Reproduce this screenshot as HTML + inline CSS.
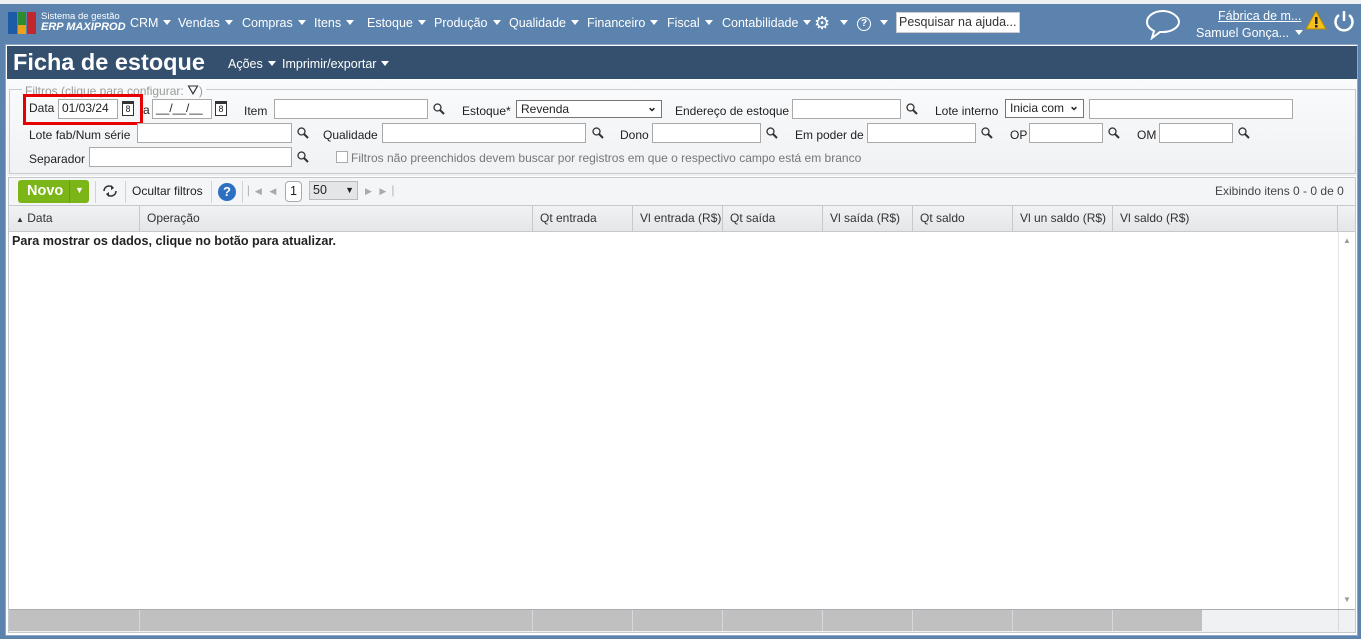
<!DOCTYPE html>
<html><head><meta charset="utf-8"><style>
*{box-sizing:border-box;margin:0;padding:0}
body{width:1361px;height:639px;overflow:hidden;background:#5b83ad;font-family:"Liberation Sans",Arial,sans-serif;font-size:12.5px;color:#222;position:relative}
.a{position:absolute;white-space:nowrap}
.nav{color:#fff;font-size:12.5px;top:16px}
.tri{display:inline-block;width:0;height:0;border-left:4px solid transparent;border-right:4px solid transparent;border-top:5px solid #fff;margin-left:5px;vertical-align:2px}
.inp{position:absolute;background:#fff;border:1px solid #a9a9a9;height:20px;white-space:nowrap;overflow:hidden;font-size:12px}
.lbl{position:absolute;font-size:12px;white-space:nowrap}
.mag{position:absolute;width:12px;height:12px}
.th{position:absolute;top:206px;height:26px;border-right:1px solid #c5c8cc;padding:5px 7px;color:#333;font-size:12px;white-space:nowrap}
.fc{position:absolute;top:610px;height:21px;border-right:1px solid #d6d8db}
.cal{position:absolute;width:12px;height:15px;border:1.5px solid #333;border-top-width:3px;font-size:9px;text-align:center;line-height:11px;background:#fff}
</style></head><body>
<div class="a" style="left:0;top:0;width:1361px;height:4px;background:#eef0f2"></div>
<div class="a" style="left:8px;top:12px;width:9px;height:22px;background:#1d5aa8"></div>
<div class="a" style="left:18px;top:12px;width:8px;height:13px;background:#2e8b2e"></div>
<div class="a" style="left:18px;top:25px;width:8px;height:9px;background:#e9a21a"></div>
<div class="a" style="left:27px;top:12px;width:9px;height:22px;background:#c0282d"></div>
<div class="a" style="left:41px;top:11px;color:#fff;font-size:9.5px">Sistema de gestão</div>
<div class="a" style="left:41px;top:21px;color:#fff;font-size:11px;font-style:italic;font-weight:bold">ERP MAXIPROD</div>
<div class="a nav" style="left:130px">CRM<span class="tri"></span></div>
<div class="a nav" style="left:178px">Vendas<span class="tri"></span></div>
<div class="a nav" style="left:242px">Compras<span class="tri"></span></div>
<div class="a nav" style="left:314px">Itens<span class="tri"></span></div>
<div class="a nav" style="left:367px">Estoque<span class="tri"></span></div>
<div class="a nav" style="left:434px">Produção<span class="tri"></span></div>
<div class="a nav" style="left:509px">Qualidade<span class="tri"></span></div>
<div class="a nav" style="left:587px">Financeiro<span class="tri"></span></div>
<div class="a nav" style="left:667px">Fiscal<span class="tri"></span></div>
<div class="a nav" style="left:722px">Contabilidade<span class="tri"></span></div>
<div class="a" style="left:814px;top:14px;color:#fff;font-size:18px;line-height:18px">⚙</div>
<div class="a nav" style="left:835px"><span class="tri"></span></div>
<div class="a" style="left:857px;top:17px;width:14px;height:14px;border:1.5px solid #fff;border-radius:50%;color:#fff;font-size:10px;text-align:center;line-height:11px;font-weight:bold">?</div>
<div class="a nav" style="left:875px"><span class="tri"></span></div>
<div class="a" style="left:896px;top:12px;width:124px;height:21px;background:#fff;border:1px solid #ccc;font-size:12.5px;padding:2px 2px;color:#333;overflow:hidden">Pesquisar na ajuda...</div>
<svg class="a" style="left:1144px;top:8px" width="38" height="32" viewBox="0 0 38 32"><path d="M19 3C10 3 3 8 3 14c0 4 3 7 7 9l-2 7 8-6h3c9 0 16-5 16-10S28 3 19 3z" fill="none" stroke="#fff" stroke-width="2"/></svg>
<div class="a" style="left:1218px;top:9px;color:#fff;font-size:12.5px;text-decoration:underline">Fábrica de m...</div>
<div class="a" style="left:1196px;top:26px;color:#fff;font-size:12.5px">Samuel Gonça...<span class="tri" style="margin-left:6px"></span></div>
<svg class="a" style="left:1305px;top:10px" width="22" height="20"><path d="M11 1L21 19H1z" fill="#f4c01e" stroke="#b58a00"/><rect x="10" y="7" width="2.5" height="7" fill="#222"/><rect x="10" y="15" width="2.5" height="2.5" fill="#222"/></svg>
<svg class="a" style="left:1333px;top:9px" width="22" height="24"><path d="M6 6A8.5 8.5 0 1 0 16 6" fill="none" stroke="#fff" stroke-width="2.5"/><path d="M11 2V12" stroke="#fff" stroke-width="2.5"/></svg>

<div class="a" style="left:5px;top:44px;width:1353px;height:592px;background:#fff;border:1px solid #8fa7c2"></div>
<div class="a" style="left:7px;top:46px;width:1350px;height:33px;background:#34506e"></div>
<div class="a" style="left:13px;top:49px;color:#fff;font-size:23.5px;font-weight:bold">Ficha de estoque</div>
<div class="a" style="left:228px;top:57px;color:#fff;font-size:12.5px">Ações<span class="tri"></span></div>
<div class="a" style="left:282px;top:57px;color:#fff;font-size:12.5px">Imprimir/exportar<span class="tri"></span></div>
<div class="a" style="left:7px;top:79px;width:1350px;height:97px;background:linear-gradient(#fafbfc,#eff1f3)"></div>
<div class="a" style="left:9px;top:89px;width:1347px;height:85px;border:1px solid #c8cbcf"></div>
<div class="a" style="left:22px;top:82px;background:#f9fafb;padding:0 3px;color:#999;font-size:12px">Filtros (clique para configurar: <span style="color:#333;font-size:14px">⛛</span>)</div>
<div class="a" style="left:23px;top:94px;width:120px;height:31px;border:3px solid #e60000"></div>
<div class="lbl" style="left:29px;top:101px">Data</div>
<div class="inp" style="left:58px;top:99px;width:60px;padding:1px 3px">01/03/24</div>
<div class="cal" style="left:122px;top:101px">8</div>
<div class="lbl" style="left:143px;top:103px">a</div>
<div class="inp" style="left:152px;top:99px;width:60px;padding:1px 3px">__/__/__</div>
<div class="cal" style="left:215px;top:101px">8</div>
<div class="lbl" style="left:244px;top:104px">Item</div>
<div class="inp" style="left:274px;top:99px;width:154px"></div>
<div class="lbl" style="left:462px;top:104px">Estoque*</div>
<div class="inp" style="left:516px;top:100px;width:146px;height:18px;padding:1px 4px;border-color:#767676">Revenda<span style="position:absolute;right:4px;top:-1px;font-weight:bold">⌄</span></div>
<div class="lbl" style="left:675px;top:104px">Endereço de estoque</div>
<div class="inp" style="left:792px;top:99px;width:109px"></div>
<div class="lbl" style="left:935px;top:104px">Lote interno</div>
<div class="inp" style="left:1005px;top:99px;width:79px;height:19px;padding:1px 4px;border-color:#767676">Inicia com<span style="position:absolute;right:4px;top:-1px;font-weight:bold">⌄</span></div>
<div class="inp" style="left:1089px;top:99px;width:204px"></div>
<div class="lbl" style="left:29px;top:128px">Lote fab/Num série</div>
<div class="inp" style="left:137px;top:123px;width:155px"></div>
<div class="lbl" style="left:323px;top:128px">Qualidade</div>
<div class="inp" style="left:382px;top:123px;width:204px"></div>
<div class="lbl" style="left:620px;top:128px">Dono</div>
<div class="inp" style="left:652px;top:123px;width:109px"></div>
<div class="lbl" style="left:795px;top:128px">Em poder de</div>
<div class="inp" style="left:867px;top:123px;width:109px"></div>
<div class="lbl" style="left:1010px;top:128px">OP</div>
<div class="inp" style="left:1029px;top:123px;width:74px"></div>
<div class="lbl" style="left:1137px;top:128px">OM</div>
<div class="inp" style="left:1159px;top:123px;width:74px"></div>
<div class="lbl" style="left:29px;top:152px">Separador</div>
<div class="inp" style="left:89px;top:147px;width:203px"></div>
<div class="a" style="left:336px;top:151px;width:12px;height:12px;border:1px solid #aaa;background:#fff"></div>
<div class="lbl" style="left:351px;top:151px;color:#777">Filtros não preenchidos devem buscar por registros em que o respectivo campo está em branco</div>
<svg class="mag" style="left:433px;top:103px"><circle cx="4.5" cy="4.5" r="3.5" fill="none" stroke="#333" stroke-width="1.3"/><path d="M7 7l4 4" stroke="#333" stroke-width="2"/></svg>
<svg class="mag" style="left:906px;top:103px"><circle cx="4.5" cy="4.5" r="3.5" fill="none" stroke="#333" stroke-width="1.3"/><path d="M7 7l4 4" stroke="#333" stroke-width="2"/></svg>
<svg class="mag" style="left:297px;top:127px"><circle cx="4.5" cy="4.5" r="3.5" fill="none" stroke="#333" stroke-width="1.3"/><path d="M7 7l4 4" stroke="#333" stroke-width="2"/></svg>
<svg class="mag" style="left:592px;top:127px"><circle cx="4.5" cy="4.5" r="3.5" fill="none" stroke="#333" stroke-width="1.3"/><path d="M7 7l4 4" stroke="#333" stroke-width="2"/></svg>
<svg class="mag" style="left:766px;top:127px"><circle cx="4.5" cy="4.5" r="3.5" fill="none" stroke="#333" stroke-width="1.3"/><path d="M7 7l4 4" stroke="#333" stroke-width="2"/></svg>
<svg class="mag" style="left:981px;top:127px"><circle cx="4.5" cy="4.5" r="3.5" fill="none" stroke="#333" stroke-width="1.3"/><path d="M7 7l4 4" stroke="#333" stroke-width="2"/></svg>
<svg class="mag" style="left:1108px;top:127px"><circle cx="4.5" cy="4.5" r="3.5" fill="none" stroke="#333" stroke-width="1.3"/><path d="M7 7l4 4" stroke="#333" stroke-width="2"/></svg>
<svg class="mag" style="left:1238px;top:127px"><circle cx="4.5" cy="4.5" r="3.5" fill="none" stroke="#333" stroke-width="1.3"/><path d="M7 7l4 4" stroke="#333" stroke-width="2"/></svg>
<svg class="mag" style="left:297px;top:151px"><circle cx="4.5" cy="4.5" r="3.5" fill="none" stroke="#333" stroke-width="1.3"/><path d="M7 7l4 4" stroke="#333" stroke-width="2"/></svg>

<div class="a" style="left:8px;top:177px;width:1348px;height:456px;border:1px solid #c5c8cc"></div>
<div class="a" style="left:9px;top:178px;width:1346px;height:28px;background:#f4f5f6;border-bottom:1px solid #c5c8cc"></div>
<div class="a" style="left:18px;top:180px;width:71px;height:23px;background:#7cb518;border-radius:3px;color:#fff;font-weight:bold;font-size:14.5px;padding:3px 9px">Novo</div>
<div class="a" style="left:69px;top:180px;width:1px;height:23px;background:#6a9c12"></div>
<div class="a" style="left:75px;top:185px;color:#fff;font-size:9px">▼</div>
<div class="a" style="left:95px;top:181px;width:1px;height:22px;background:#d0d2d5"></div>
<svg class="a" style="left:102px;top:184px" width="16" height="14"><path d="M2 7a5 5 0 0 1 9-3M14 7a5 5 0 0 1-9 3" fill="none" stroke="#333" stroke-width="1.6"/><path d="M9 1l3 3-3 2zM7 13l-3-3 3-2z" fill="#333"/></svg>
<div class="a" style="left:125px;top:181px;width:1px;height:22px;background:#d0d2d5"></div>
<div class="a" style="left:132px;top:184px;font-size:12px">Ocultar filtros</div>
<div class="a" style="left:211px;top:181px;width:1px;height:22px;background:#d0d2d5"></div>
<div class="a" style="left:218px;top:183px;width:18px;height:18px;border-radius:50%;background:#2d6fc1;color:#fff;font-weight:bold;text-align:center;line-height:18px;font-size:13px">?</div>
<div class="a" style="left:242px;top:181px;width:1px;height:22px;background:#d0d2d5"></div>
<div class="a" style="left:248px;top:186px;color:#aaa;font-size:9px">▏◀ &nbsp; ◀</div>
<div class="a" style="left:285px;top:181px;width:17px;height:21px;border:1px solid #aaa;border-radius:4px;background:#fff;text-align:center;line-height:19px">1</div>
<div class="a" style="left:309px;top:181px;width:49px;height:19px;border:1px solid #bbb;background:#e4e5e6;padding:1px 3px">50<span style="position:absolute;right:3px;top:3px;font-size:9px">▼</span></div>
<div class="a" style="left:365px;top:186px;color:#aaa;font-size:9px">▶ &nbsp; ▶▕</div>
<div class="a" style="left:1215px;top:184px;color:#444;font-size:12px">Exibindo itens 0 - 0 de 0</div>
<div class="a" style="left:9px;top:206px;width:1346px;height:26px;background:linear-gradient(#f1f2f3,#e4e6e8);border-bottom:1px solid #c5c8cc"></div>
<div class="th" style="left:9px;width:131px"><span style="font-size:8px">▲</span> Data</div>
<div class="th" style="left:140px;width:393px">Operação</div>
<div class="th" style="left:533px;width:100px">Qt entrada</div>
<div class="th" style="left:633px;width:90px">Vl entrada (R$)</div>
<div class="th" style="left:723px;width:100px">Qt saída</div>
<div class="th" style="left:823px;width:90px">Vl saída (R$)</div>
<div class="th" style="left:913px;width:100px">Qt saldo</div>
<div class="th" style="left:1013px;width:100px">Vl un saldo (R$)</div>
<div class="th" style="left:1113px;width:225px;border-right:1px solid #c5c8cc">Vl saldo (R$)</div>
<div class="a" style="left:12px;top:234px;font-weight:bold;font-size:12.6px">Para mostrar os dados, clique no botão para atualizar.</div>
<div class="a" style="left:1338px;top:232px;width:17px;height:377px;background:#fff;border-left:1px solid #e3e4e6"></div>
<div class="a" style="left:1343px;top:236px;color:#999;font-size:8px">▲</div>
<div class="a" style="left:1343px;top:595px;color:#999;font-size:8px">▼</div>
<div class="a" style="left:9px;top:609px;width:1346px;height:23px;background:#f0f1f3;border-top:1px solid #a9adb2"></div>
<div class="fc" style="left:9px;width:131px;background:#c0c0c0"></div>
<div class="fc" style="left:140px;width:393px;background:#c0c0c0"></div>
<div class="fc" style="left:533px;width:100px;background:#c0c0c0"></div>
<div class="fc" style="left:633px;width:90px;background:#c0c0c0"></div>
<div class="fc" style="left:723px;width:100px;background:#c0c0c0"></div>
<div class="fc" style="left:823px;width:90px;background:#c0c0c0"></div>
<div class="fc" style="left:913px;width:100px;background:#c0c0c0"></div>
<div class="fc" style="left:1013px;width:100px;background:#c0c0c0"></div>
<div class="fc" style="left:1113px;width:89px;background:#c0c0c0;border-right:none"></div>
<div class="fc" style="left:1338px;width:1px;background:#a9adb2"></div>
</body></html>
